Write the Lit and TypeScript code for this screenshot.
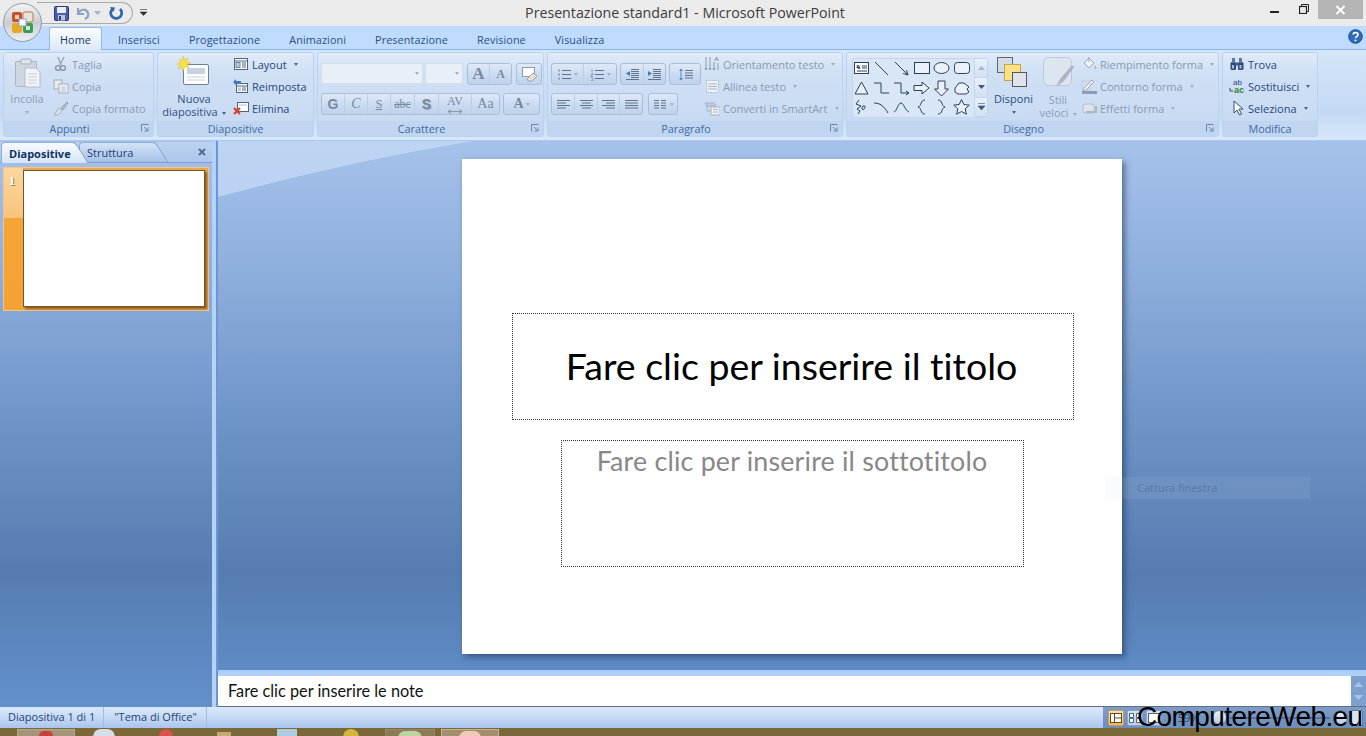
import { LitElement, css, html, svg } from 'lit';
import { customElement } from 'lit/decorators.js';

const icon = (w: number, h: number, body: unknown) =>
  html`<svg class="ico" width=${w} height=${h} viewBox="0 0 ${w} ${h}">${body}</svg>`;

const caret = html`<span class="caret"></span>`;

// small ribbon icons, 16x16
const ICONS: Record<string, unknown> = {
  cut: svg`<path d="M5 1l3 8M11 1L7 9" stroke="#9aa6b6" stroke-width="1.4" fill="none"/><circle cx="5" cy="12" r="2.4" fill="none" stroke="#8a96a8" stroke-width="1.4"/><circle cx="10" cy="12" r="2.4" fill="none" stroke="#8a96a8" stroke-width="1.4"/>`,
  copy: svg`<rect x="1" y="2" width="8" height="9" fill="#e6ebf2" stroke="#a6aebb"/><rect x="6" y="6" width="9" height="9" fill="#f0f3f7" stroke="#a6aebb"/><path d="M8 9h5M8 11h5M8 13h5" stroke="#b8c0cc"/>`,
  brush: svg`<path d="M1 15l5-7 3 3-4 4z" fill="#dfe3e8" stroke="#a9b0ba"/><path d="M8 8l6-6 1 1-5 7z" fill="#b7bdc6" stroke="#98a0ac"/>`,
  layout: svg`<rect x="1.500" y="2.500" width="13" height="11" fill="#fff" stroke="#4f6480"/><path d="M1.500 5h13" stroke="#4f6480"/><rect x="3" y="6.500" width="4" height="5" fill="#b9cbe2" stroke="#6d86a6"/><path d="M9 7h4M9 9h4M9 11h4" stroke="#4f6480"/>`,
  reset: svg`<rect x="3.500" y="5.500" width="11" height="9" fill="#fff" stroke="#4f6480"/><path d="M3.500 8h11" stroke="#4f6480"/><path d="M9 10h4M9 12h4" stroke="#4f6480"/><rect x="5" y="9.500" width="3" height="3.500" fill="#b9cbe2"/><path d="M0 4l3-3v2h5v3H3v1z" fill="#3f7ac2"/>`,
  del: svg`<rect x="4.500" y="2.500" width="11" height="9" fill="#fff" stroke="#4f6480"/><path d="M6 5h8" stroke="#aebfd5"/><path d="M1 8l6 6M7 8l-6 6" stroke="#d8402c" stroke-width="2.200"/>`,
  orient: svg`<path d="M2 1v13M6 1v13M10 6v8" stroke="#8b9bb0" fill="none"/><path d="M1 12l1 2 1-2M5 12l1 2 1-2M9 12l1 2 1-2" stroke="#8b9bb0" fill="none"/><path d="M10.500 5l2-4 2 4M11.500 3.500h2" stroke="#8b9bb0" fill="none"/><path d="M14 7v7" stroke="#8b9bb0"/>`,
  align: svg`<rect x="2.500" y="2.500" width="12" height="12" fill="#eef2f7" stroke="#b4bdc9" stroke-dasharray="2 1"/><path d="M4 6h9M4 8.500h9M4 11h9" stroke="#aab5c4"/>`,
  smart: svg`<path d="M1 3h9l2 3H3z" fill="#c4ccd7" stroke="#a6b0bd"/><rect x="7" y="7" width="9" height="8" fill="#eef2f7" stroke="#aab4c1"/><path d="M9 9.500h5M9 12h5" stroke="#aab4c1"/><path d="M3 6v5h4" fill="none" stroke="#a6b0bd"/>`,
  fill: svg`<path d="M3 7l5-5 5 5-5 5z" fill="#eef2f7" stroke="#9ba6b5"/><path d="M8 1v5" stroke="#9ba6b5"/><path d="M14 9c1 2 2 3 1 4s-2-1-1-4z" fill="#aab3bf"/>`,
  line: svg`<path d="M3 10l8-8 2 2-8 8-3 1z" fill="#f1f3f6" stroke="#9ba6b5"/><rect x="1" y="13" width="15" height="3" fill="#8c9cb3"/><rect x="1" y="3" width="8" height="9" fill="none" stroke="#c3cad4"/>`,
  fx: svg`<rect x="2" y="4" width="11" height="9" rx="2" fill="#dfe4ea" stroke="#b4bcc7"/><path d="M5 12h10V6" stroke="#aeb6c1" stroke-width="2" fill="none"/>`,
  find: svg`<rect x="1.500" y="6" width="5.500" height="8" rx="1.500" fill="#2d4d78"/><rect x="9" y="6" width="5.500" height="8" rx="1.500" fill="#2d4d78"/><rect x="3" y="2" width="3" height="5" fill="#5a7aa6"/><rect x="10" y="2" width="3" height="5" fill="#5a7aa6"/><rect x="6" y="6.500" width="4" height="3" fill="#3b5b88"/><rect x="3" y="9" width="2" height="3.500" fill="#a9c0dd"/><rect x="10.500" y="9" width="2" height="3.500" fill="#a9c0dd"/>`,
  select: svg`<path d="M5 1v12l3-3 2.500 5 2-1-2.500-5h4z" fill="#fff" stroke="#35506f"/>`,
};

const SHAPES = [
  svg`<rect x="2.500" y="3.500" width="14" height="11" fill="#fff" stroke="#2b3f5c"/><path d="M5 6l1.500 4M6.500 6l1.500 4M4.500 8.500h3M10 7h5M10 9h5M5 12h10" stroke="#2b3f5c" fill="none"/>`,
  svg`<path d="M3 3l13 13" stroke="#2b3f5c" fill="none"/>`,
  svg`<path d="M3 3l13 13M16 16l-5-1.500M16 16l-1.500-5" stroke="#2b3f5c" fill="none"/>`,
  svg`<rect x="2.500" y="3.500" width="15" height="11" fill="#eaf1fa" stroke="#2b3f5c"/>`,
  svg`<ellipse cx="9.500" cy="9" rx="7.500" ry="5.500" fill="#eaf1fa" stroke="#2b3f5c"/>`,
  svg`<rect x="2.500" y="3.500" width="15" height="11" rx="3" fill="#eaf1fa" stroke="#2b3f5c"/>`,
  svg`<path d="M9.500 3L16 15H3z" fill="#eaf1fa" stroke="#2b3f5c"/>`,
  svg`<path d="M2 4h7v10h8" fill="none" stroke="#2b3f5c"/>`,
  svg`<path d="M2 4h7v10h8M17 14l-3-2M17 14l-3 2" fill="none" stroke="#2b3f5c"/>`,
  svg`<path d="M2 6.500h8V3l7 6-7 6v-3.500H2z" fill="#eaf1fa" stroke="#2b3f5c"/>`,
  svg`<path d="M6 2h7v8h3.500l-7 7-7-7H6z" fill="#eaf1fa" stroke="#2b3f5c"/>`,
  svg`<path d="M3 13V9l4-5h5l5 4-2 2 2 3-3 2H6z" fill="#eaf1fa" stroke="#2b3f5c"/>`,
  svg`<path d="M7 2L4 6l5 2-4 3 3 2-2 3M11 8c2-1 3 1 1 3s-3-1-1-3" fill="none" stroke="#2b3f5c"/>`,
  svg`<path d="M2 5c6 0 10 3 14 10" fill="none" stroke="#2b3f5c"/>`,
  svg`<path d="M2 14c3-1 4-9 7-9s4 8 8 9" fill="none" stroke="#2b3f5c"/>`,
  svg`<path d="M13 2c-5 0-3 6-7 7 4 1 2 7 7 7" fill="none" stroke="#2b3f5c"/>`,
  svg`<path d="M6 2c5 0 3 6 7 7-4 1-2 7-7 7" fill="none" stroke="#2b3f5c"/>`,
  svg`<path d="M9.500 1.500l2.300 5 5.400.6-4 3.700 1.100 5.400-4.800-2.700-4.800 2.700 1.100-5.400-4-3.700 5.400-.6z" fill="#eaf1fa" stroke="#2b3f5c"/>`,
];

const TABS = ['Home', 'Inserisci', 'Progettazione', 'Animazioni', 'Presentazione', 'Revisione', 'Visualizza'];

const INK = '#60728c';

// paragraph toolbar glyphs
const para = (d: string) => icon(15, 13, svg`<path d=${d} stroke=${INK} fill="none"/>`);
const BULLETS = icon(15, 13, svg`<path d="M5 2.500h9M5 6.500h9M5 10.500h9" stroke=${INK}/><rect x="1" y="1.500" width="2" height="2" fill="#8aa2c2"/><rect x="1" y="5.500" width="2" height="2" fill="#8aa2c2"/><rect x="1" y="9.500" width="2" height="2" fill="#8aa2c2"/>`);
const NUMBERS = icon(15, 13, svg`<path d="M5 2.500h9M5 6.500h9M5 10.500h9" stroke=${INK}/><path d="M2 1v3M1 5.500h2v1.500H1v1.500h2M1 10h2v2.500H1" stroke="#8aa2c2" fill="none"/>`);
const INDENT_L = icon(15, 13, svg`<path d="M6 1.500h8M6 3.500h8M6 5.500h8M6 7.500h8M6 9.500h8M1 11.500h13" stroke=${INK}/><path d="M5 3v5L1 5.500z" fill="#4a78b0"/>`);
const INDENT_R = icon(15, 13, svg`<path d="M6 1.500h8M6 3.500h8M6 5.500h8M6 7.500h8M6 9.500h8M1 11.500h13" stroke=${INK}/><path d="M1 3v5l4-2.500z" fill="#4a78b0"/>`);
const SPACING = icon(15, 13, svg`<path d="M7 2.500h8M7 5h8M7 7.500h8M7 10h8" stroke=${INK}/><path d="M3 1v11" stroke="#5b8ac0"/><path d="M1 3l2-2.500L5 3zM1 10l2 2.500L5 10z" fill="#5b8ac0"/>`);

const small = (name: string, label: string, opts: { off?: boolean; more?: boolean } = {}) => html`
  <div class="small ${opts.off ? 'off' : ''}">
    ${icon(16, 16, ICONS[name])}<span>${label}</span>${opts.more ? caret : ''}
  </div>
`;

const group = (cls: string, label: string, launcher: boolean, body: unknown) => html`
  <section class="group ${cls}">
    <div class="gbody">${body}</div>
    <div class="glabel ${launcher ? 'has-launcher' : ''}">
      <span>${label}</span>
      ${launcher
        ? html`<i class="launcher">${icon(8, 8, svg`<path d="M.5 7.500v-7h7M3 3l3.500 3.500M7 3.500V7H3.500" fill="none" stroke="#6a86ad"/>`)}</i>`
        : ''}
    </div>
  </section>
`;

@customElement('app-root')
export class AppRoot extends LitElement {
  static styles = css`
    :host {
      display: block;
      position: relative;
      width: 1366px;
      height: 736px;
      overflow: hidden;
      font: 11px 'Open Sans', 'Noto Sans', sans-serif;
      color: #15428b;
    }
    .ico { display: block; flex: none; }

    .title {
      height: 26px;
      background: #ebebeb;
      display: flex;
      align-items: flex-start;
      position: relative;
    }
    .orb { position: absolute; left: 0; top: 0; z-index: 3; }
    .qat {
      margin-left: 37px;
      width: 96px;
      height: 22px;
      margin-top: 2px;
      border: 1px solid #a9a9a9;
      border-left: 0;
      border-radius: 0 12px 12px 0;
      display: flex;
      align-items: center;
      padding-left: 17px;
      box-sizing: border-box;
    }
    .qat .gap1 { margin-left: 7px; }
    .qat .gap2 { margin-left: 4px; }
    .qat .gap3 { margin-left: 7px; }
    .qat-more { margin: 9px 0 0 7px; }
    .doc-title {
      position: absolute;
      left: 0;
      right: 0;
      top: 4px;
      text-align: center;
      font-size: 14.200px;
      line-height: 18px;
      color: #3c3c3c;
      padding-left: 4px;
    }
    .winbtns { margin-left: auto; display: flex; align-items: flex-start; padding-right: 3px; position: relative; }
    .winbtns .m { margin: 11px 0 0 0; width: 9px; height: 2px; background: #222; }
    .winbtns .r { margin: 4px 9px 0 20px; }
    .winbtns .x {
      width: 45px;
      height: 19px;
      background: #b4b4b4;
      display: flex;
      align-items: center;
      justify-content: center;
    }

    .tabs {
      height: 24px;
      background: #bfdbff;
      display: flex;
      align-items: flex-end;
      padding-left: 49px;
      box-sizing: border-box;
      border-bottom: 1px solid #8db2e3;
      position: relative;
    }
    .tab {
      height: 22px;
      line-height: 25px;
      padding: 0 14.500px;
      color: #2b4f80;
      font-size: 10.800px;
      letter-spacing: 0.1px;
      white-space: nowrap;
    }
    .tab.on {
      width: 53px;
      box-sizing: border-box;
      padding: 0;
      text-align: center;
      height: 23px;
      line-height: 24px;
      margin: 0 1.500px -1px 0;
      background: linear-gradient(#fbfdff, #dce9f9);
      border: 1px solid #9ab8df;
      border-bottom: 0;
      border-radius: 3px 3px 0 0;
      color: #15385f;
    }
    .help { position: absolute; right: 3px; top: 3px; }

    .ribbon {
      height: 91px;
      box-sizing: border-box;
      display: flex;
      gap: 3px;
      padding: 2px 3px 0;
      background: linear-gradient(#d6e6fa, #c3d9f4 70%, #d8e8fb);
      border-bottom: 1px solid #a9c7ee;
    }
    .group {
      height: 85px;
      box-sizing: border-box;
      border: 1px solid #bcd1ec;
      border-radius: 3px;
      overflow: hidden;
      display: flex;
      flex-direction: column;
      background: linear-gradient(#e0ebf9, #d0e0f5 22%, #c6d9f2);
    }
    .gbody { height: 69px; display: flex; position: relative; box-sizing: border-box; }
    .glabel {
      flex: 1;
      background: #bfd5f0;
      text-align: center;
      line-height: 15px;
      color: #3f6aa3;
      font-size: 10.800px;
      position: relative;
    }
    .glabel.has-launcher { padding-right: 18px; }
    .launcher { position: absolute; right: 4px; top: 3px; }
    .g-app { width: 151px; }
    .g-dia { width: 157px; }
    .g-car { width: 227px; }
    .g-par { width: 296px; }
    .g-dis { width: 373px; }
    .g-mod { width: 96px; }

    .big {
      display: flex;
      flex-direction: column;
      align-items: center;
      text-align: center;
      line-height: 13px;
      color: #2b4f80;
      box-sizing: border-box;
    }
    .big.off { color: #8f9eb2; }
    .big .txt { margin-top: 4px; }
    .big > .caret { margin: 6px 0 0 0; }
    .col { display: flex; flex-direction: column; }
    .small {
      height: 22px;
      display: flex;
      align-items: center;
      gap: 3px;
      color: #25487a;
      white-space: nowrap;
    }
    .small.off { color: #8a9ab0; }
    .caret {
      display: inline-block;
      width: 0;
      height: 0;
      margin-left: 4px;
      border: 2.500px solid transparent;
      border-top: 3px solid #4a6288;
      border-bottom: 0;
      vertical-align: middle;
    }
    .off .caret, .tb .caret, .combo .caret { border-top-color: #a3aebf; }

    .b-incolla { width: 46px; padding-top: 5px; }
    .c-app { margin: 0 0 0 3px; }
    .b-nuova { width: 72px; padding-top: 3px; }
    .b-nuova .txt { margin-top: 6px; }
    .c-dia { margin: 0 0 0 3px; }

    .stack { padding: 10px 0 0 3px; display: flex; flex-direction: column; gap: 8px; }
    .c-par { padding-left: 3px; }
    .row { display: flex; gap: 3px; height: 22px; }
    .combo {
      height: 21px;
      background: #e9eff7;
      border: 1px solid #d3dfee;
      box-sizing: border-box;
      display: flex;
      align-items: center;
      justify-content: flex-end;
      padding-right: 3px;
    }
    .combo.font { width: 102px; margin-right: -1px; }
    .combo.size { width: 38px; }
    .tb {
      height: 22px;
      box-sizing: border-box;
      display: flex;
      align-items: center;
      border: 1px solid #a9bed9;
      border-radius: 3px;
      background: linear-gradient(#dfe9f6, #cbdcf2 50%, #bed2ec);
      color: #7b8ca6;
    }
    .tb > * {
      height: 100%;
      display: flex;
      align-items: center;
      justify-content: center;
      box-sizing: border-box;
      border-right: 1px solid #bccde4;
    }
    .tb > *:last-child { border-right: 0; }
    .tb .caret { margin-left: 2px; }
    .glyph { font: bold 12px 'Liberation Serif', serif; color: #77889f; white-space: nowrap; }
    .glyph.sans { font-family: 'Liberation Sans', sans-serif; }
    .glyph.thin { font-weight: 400; }
    .glyph.lg { font-size: 17px; }
    .glyph.md { font-size: 14px; }
    .glyph.ital { font-style: italic; }
    .glyph.under { text-decoration: underline; }
    .glyph.strike { text-decoration: line-through; }
    .glyph.shadow { text-shadow: 1px 1px 1px #9aa9bd; }
    .stretch { display: flex; flex-direction: column; align-items: center; line-height: 9px; }
    .w21 { width: 21px; } .w22 { width: 22px; }
    .w23 { width: 23px; } .w24 { width: 24px; } .w27 { width: 27px; } .w28 { width: 28px; }
    .w30 { width: 30px; } .w32 { width: 32px; } .w33 { width: 33px; } .w35 { width: 35px; }
    .ml1 { margin-left: 1px; }
    .ml2 { margin-left: 2px; }
    .gallery {
      width: 136px;
      height: 60px;
      margin: 5px 0 0 5px;
      display: flex;
      border: 1px solid #c4d5ec;
      border-radius: 2px;
      box-sizing: border-box;
      background: #d9e6f6;
    }
    .shapes {
      width: 121px;
      display: grid;
      grid-template-columns: repeat(6, 20px);
      grid-auto-rows: 19.500px;
    }
    .shapes .ico { margin-left: -1px; }
    .scroll { flex: 1; display: flex; flex-direction: column; }
    .scroll div {
      flex: 1;
      border-left: 1px solid #c4d5ec;
      border-bottom: 1px solid #c4d5ec;
      background: linear-gradient(#e9f0f9, #d2e0f3);
      display: flex;
      align-items: center;
      justify-content: center;
    }
    .b-disponi { width: 45px; margin-left: 3px; padding-top: 3px; }
    .b-disponi .ico { margin-left: -3px; }
    .b-disponi .txt { margin-top: 4px; }
    .b-stili { width: 44px; padding-top: 3px; }
    .b-stili .txt { margin-top: 5px; }
    .c-dis { margin: 0 0 0 1px; }
    .c-mod { margin: 0 0 0 6px; }
    .spacer { flex: 1; }

    .main { height: 566px; display: flex; background: #5d88c0; }
    .pane {
      width: 212px;
      background: linear-gradient(#a5c2ea 0, #8eaedd 23%, #7096c8 48%, #6287bb 63%, #557db1 76%, #5f8ac5 94%, #6290ca 100%);
      flex: none;
      box-sizing: border-box;
      padding-top: 1px;
    }
    .panetabs {
      height: 20px;
      display: flex;
      align-items: flex-end;
      border-bottom: 1px solid #7ba0d2;
      position: relative;
      padding-left: 1px;
      background: linear-gradient(#bcd2f0, #adc6ea);
    }
    .ptab {
      height: 20px;
      display: flex;
      align-items: center;
      padding-left: 7px;
      box-sizing: border-box;
      border: 1px solid #8badd9;
      border-bottom: 0;
      border-right: 0;
      border-radius: 4px 0 0 0;
      position: relative;
    }
    .ptab::after {
      content: '';
      position: absolute;
      right: -7px;
      top: -1px;
      bottom: 0;
      width: 14px;
      border-top: 1px solid #8badd9;
      border-right: 1px solid #6f94c8;
      border-radius: 0 4px 0 0;
      transform: skewX(32deg);
    }
    .ptab.on {
      width: 74px;
      background: linear-gradient(#f8fbff, #d6e5f8);
      font-weight: 700;
      color: #12315f;
      margin-bottom: -1px;
      height: 21px;
      z-index: 1;
    }
    .ptab.on::after { background: linear-gradient(#f8fbff, #d6e5f8); }
    .ptab.off {
      width: 76px;
      margin-left: 4px;
      padding-left: 7px;
      background: linear-gradient(#d4e3f6, #a5c0e6);
      color: #1d3e70;
    }
    .ptab.off::after { background: linear-gradient(#d4e3f6, #a5c0e6); }
    .ptab span { position: relative; z-index: 1; }
    .pclose { position: absolute; right: 6px; top: 6px; }
    .thumb {
      margin: 4px 3px 0;
      height: 144px;
      display: flex;
      border: 1px solid #f2c78a;
      box-sizing: border-box;
      background: #eba750;
      position: relative;
    }
    .numcol {
      width: 19px;
      background: linear-gradient(#fbd79e, #f9c47a 35%, #f5a535 35%, #f4a233);
      font: bold 12px 'Liberation Serif', serif;
      color: #fff;
      text-shadow: 1px 1px 0 #94743a;
      padding: 6px 0 0 5px;
      box-sizing: border-box;
      flex: none;
    }
    .thumbpage {
      width: 182px;
      height: 137px;
      margin-top: 2px;
      background: #fff;
      border: 1px solid #6f5530;
      box-sizing: border-box;
      box-shadow: 2px 2px 2px rgba(110, 60, 10, 0.7);
    }
    .splitter { width: 6px; flex: none; background: linear-gradient(90deg, #b6d3f7 0, #b6d3f7 66%, #6b96d6 66%, #6b96d6 100%); }
    .work { flex: 1; display: flex; flex-direction: column; min-width: 0; }
    .canvas {
      height: 529px;
      flex: none;
      box-sizing: border-box;
      padding-top: 2px;
      position: relative;
      overflow: hidden;
      display: flex;
      align-items: center;
      justify-content: center;
      background: linear-gradient(#a5c2ea 0, #8eaedd 25%, #7096c8 51%, #6287bb 68%, #557db1 82%, #5f8ac5 100%);
    }
    .swoosh { position: absolute; left: 0; top: 0; }
    .slide {
      position: relative;
      width: 660px;
      height: 495px;
      background: #fff;
      box-shadow: 3px 3px 6px rgba(25, 45, 80, 0.55);
      display: flex;
      flex-direction: column;
      align-items: center;
      box-sizing: border-box;
      padding-top: 154px;
      gap: 20px;
      font-family: Lato, 'Open Sans', sans-serif;
      font-variant-ligatures: none;
    }
    .ph-title {
      width: 562px;
      height: 107px;
      margin-left: 2px;
      padding: 0 3px 2px 0;
      border: 1px dotted #333;
      box-sizing: border-box;
      display: flex;
      align-items: center;
      justify-content: center;
      font-size: 37.500px;
      color: #000;
      white-space: nowrap;
    }
    .ph-sub {
      width: 463px;
      height: 127px;
      border: 1px dotted #333;
      box-sizing: border-box;
      text-align: center;
      font-size: 26.800px;
      line-height: 40px;
      letter-spacing: 0.2px;
      color: #888;
      white-space: nowrap;
    }
    .ghost {
      position: absolute;
      left: 887px;
      top: 336px;
      width: 205px;
      height: 22px;
      background: rgba(200, 215, 240, 0.1);
      color: rgba(50, 85, 140, 0.45);
      line-height: 22px;
      padding-left: 32px;
      box-sizing: border-box;
    }
    .notesrow {
      flex: 1;
      padding-top: 6px;
      display: flex;
      background: linear-gradient(#a6cdf5, #bcd6f7 30%, #c7dcf8);
    }
    .notes {
      flex: 1;
      background: #fff;
      color: #111;
      font: 16.300px/29px Lato, 'Open Sans', sans-serif;
      font-variant-ligatures: none;
      padding-left: 10px;
      white-space: nowrap;
      border-bottom: 1px solid #5d6f88;
    }
    .vscroll {
      width: 15px;
      flex: none;
      background: #7d9fcf;
      display: flex;
      flex-direction: column;
      justify-content: space-between;
      align-items: center;
      padding: 6px 0;
      box-sizing: border-box;
      border-bottom: 1px solid #5d6f88;
    }

    .status {
      height: 21px;
      display: flex;
      background: linear-gradient(#dbe8fb, #c5d9f4 50%, #a9c5ec);
      color: #1f4577;
      line-height: 20px;
    }
    .status .sec { padding: 0 8px; border-right: 1px solid #a3bcdc; white-space: nowrap; }
    .status .sec + .sec { padding: 0 9px 0 10px; }
    .zoombar {
      margin-left: auto;
      width: 263px;
      background: linear-gradient(#7f9cc6, #6f8dba);
      display: flex;
      align-items: center;
      box-sizing: border-box;
      padding-left: 5px;
      gap: 3px;
      color: #274873;
    }
    .view {
      width: 22px;
      height: 16px;
      display: flex;
      align-items: center;
      justify-content: center;
      border: 1px solid #8aa6cd;
      border-radius: 2px;
      box-sizing: border-box;
      background: linear-gradient(#d8e5f6, #b7cdea);
    }
    .view.on { background: linear-gradient(#fbe3a8, #f4b654); border-color: #c9a15e; }
    .pct { margin-left: 13px; }
    .slider { margin-left: 10px; display: flex; align-items: center; }
    .rnd {
      width: 15px;
      height: 15px;
      border-radius: 50%;
      border: 1px solid #5f7ba6;
      box-sizing: border-box;
      background: linear-gradient(#e9f0fa, #b5cae6);
    }
    .track { width: 100px; height: 2px; background: #56729e; margin: 0 3px; }
    .fit { margin-left: auto; margin-right: 3px; width: 16px; height: 16px; background: #d6e2f3; border: 1px solid #5f7ba6; box-sizing: border-box; }

    .taskbar {
      height: 8px;
      background: #7b6839;
      display: flex;
      overflow: hidden;
    }
    .tk { height: 9px; flex: none; }
    .btn { margin-top: 1px; background: #a4957a; border: 1px solid #b5a78f; box-sizing: border-box; display: flex; justify-content: center; }
    .dot { width: 14px; height: 5px; margin-top: 1px; border-radius: 7px 7px 0 0; }
    .t1 { margin-left: 17px; width: 58px; }
    .t1 .dot { background: #c8423a; }
    .t2 { margin: 1px 0 0 18px; width: 22px; background: #d7dce6; border-radius: 8px 8px 0 0; }
    .t3 { margin: 1px 0 0 44px; width: 14px; background: #d8534c; border-radius: 7px 7px 0 0; }
    .t4 { margin: 4px 0 0 44px; width: 14px; background: #c8a873; }
    .t5 { margin: 1px 0 0 46px; width: 20px; background: #aecbe0; }
    .t6 { margin: 1px 0 0 46px; width: 16px; background: #d2b53a; border-radius: 8px 8px 0 0; }
    .t7 { margin-left: 26px; width: 50px; background: #8a7a55; border-color: #96876a; }
    .t7 .dot { width: 24px; height: 8px; background: #bcd3a3; }
    .t8 { margin-left: 6px; width: 58px; background: #a58e6e; border-color: #c5b298; }
    .t8 .dot { width: 22px; height: 8px; background: #eec9b8; }

    .watermark {
      position: absolute;
      left: 1137px;
      top: 699px;
      font: 28px/36px 'Liberation Sans', Arial, sans-serif;
      color: #000;
      white-space: nowrap;
      letter-spacing: -0.6px;
    }
  `;

  render() {
    return html`
      ${this.renderTitle()}
      ${this.renderTabs()}
      ${this.renderRibbon()}
      <div class="main">
        <aside class="pane">
          <div class="panetabs">
            <div class="ptab on"><span>Diapositive</span></div>
            <div class="ptab off"><span>Struttura</span></div>
            <span class="pclose">${icon(8, 8, svg`<path d="M1 1l6 6M7 1L1 7" stroke="#4e6a92" stroke-width="1.800"/>`)}</span>
          </div>
          <div class="thumb">
            <div class="numcol">1</div>
            <div class="thumbpage"></div>
          </div>
        </aside>
        <div class="splitter"></div>
        <div class="work">
          <div class="canvas">
            <svg class="swoosh" width="320" height="60" viewBox="0 0 320 60">
              <path d="M0 0H255C170 14 80 34 0 56z" fill="#c6daf5" opacity=".75"/>
            </svg>
            <div class="slide">
              <div class="ph-title">Fare clic per inserire il titolo</div>
              <div class="ph-sub">Fare clic per inserire il sottotitolo</div>
            </div>
            <div class="ghost">Cattura finestra</div>
          </div>
          <div class="notesrow">
            <div class="notes">Fare clic per inserire le note</div>
            <div class="vscroll">
              ${icon(9, 5, svg`<path d="M4.500 0l4.500 5H0z" fill="#adc3e2"/>`)}
              ${icon(9, 5, svg`<path d="M4.500 5L9 0H0z" fill="#adc3e2"/>`)}
            </div>
          </div>
        </div>
      </div>
      <footer class="status">
        <div class="sec">Diapositiva 1 di 1</div>
        <div class="sec">"Tema di Office"</div>
        <div class="zoombar">
          <div class="view on">${icon(12, 10, svg`<rect x=".5" y=".5" width="11" height="9" fill="#fff" stroke="#5a4a2a"/><path d="M4.500 1v8M5 5h6" stroke="#5a4a2a"/>`)}</div>
          <div class="view">${icon(12, 10, svg`<path d="M.5.500h4v4h-4zM7.500.500h4v4h-4zM.5 5.500h4v4h-4zM7.500 5.500h4v4h-4z" fill="#fff" stroke="#4f6480"/>`)}</div>
          <div class="view">${icon(12, 10, svg`<rect x=".5" y=".5" width="11" height="9" fill="#fff" stroke="#4f6480"/>`)}</div>
          <span class="pct">59%</span>
          <div class="slider"><div class="rnd"></div><div class="track"></div><div class="rnd"></div></div>
          <div class="fit"></div>
        </div>
      </footer>
      <div class="taskbar">
        <div class="tk btn t1"><span class="dot"></span></div>
        <div class="tk t2"></div>
        <div class="tk t3"></div>
        <div class="tk t4"></div>
        <div class="tk t5"></div>
        <div class="tk t6"></div>
        <div class="tk btn t7"><span class="dot"></span></div>
        <div class="tk btn t8"><span class="dot"></span></div>
      </div>
      <div class="watermark">ComputereWeb.eu</div>
    `;
  }

  private renderTitle() {
    return html`
      <header class="title">
        <svg class="orb" width="46" height="46" viewBox="0 0 46 46">
          <defs>
            <linearGradient id="orbg" x1="0" y1="0" x2="0" y2="1">
              <stop offset="0" stop-color="#f3f5f7"/><stop offset=".5" stop-color="#c9ced4"/><stop offset="1" stop-color="#eef0f2"/>
            </linearGradient>
          </defs>
          <circle cx="22.500" cy="22.500" r="19" fill="url(#orbg)" stroke="#8f9aa6"/>
          <rect x="12" y="12" width="10" height="10" rx="2" fill="#c9502c"/>
          <rect x="23" y="12" width="10" height="10" rx="2" fill="#e8e4d8" stroke="#b57a4a"/>
          <rect x="12" y="23" width="10" height="10" rx="2" fill="#e9a823"/>
          <rect x="23" y="23" width="10" height="10" rx="2" fill="#3f9c56"/>
          <rect x="19" y="19" width="7" height="7" fill="#fff" stroke="#7ea6d6"/>
          <rect x="15" y="15" width="4" height="4" fill="#f0d2b8"/>
          <rect x="26" y="26" width="4" height="4" fill="#cfe8cf"/>
        </svg>
        <div class="qat">
          ${icon(15, 15, svg`<rect x=".5" y=".5" width="14" height="14" rx="1" fill="#4a5fa8" stroke="#2c3a78"/><rect x="3" y="1" width="9" height="6" fill="#e8edf6"/><rect x="4" y="9" width="7" height="5.500" fill="#b9c5de"/><rect x="5" y="10" width="2" height="4" fill="#2c3a78"/>`)}
          <span class="gap1">${icon(14, 14, svg`<path d="M2 2v6h6M2 8c2-5 8-6 10-1 1 3-1 5-3 6" fill="none" stroke="#8fa3c4" stroke-width="2.200"/>`)}</span>
          <span class="gap2">${icon(7, 4, svg`<path d="M0 0h7L3.500 4z" fill="#a5b3c8"/>`)}</span>
          <span class="gap3">${icon(15, 15, svg`<path d="M12 3a5.500 5.500 0 1 1-7-.5" fill="none" stroke="#2f68b0" stroke-width="2.800"/><path d="M2 1l5 .5L5.500 6z" fill="#2f68b0"/>`)}</span>
        </div>
        <span class="qat-more">${icon(7, 7, svg`<path d="M0 .5h7M0 3h7L3.500 6.500z" fill="#333" stroke="#333" stroke-width=".6"/>`)}</span>
        <div class="doc-title">Presentazione standard1 - Microsoft PowerPoint</div>
        <div class="winbtns">
          <div class="m"></div>
          <div class="r">${icon(10, 10, svg`<rect x=".5" y="2.500" width="7" height="7" fill="none" stroke="#222" stroke-width="1.200"/><path d="M2.500 2.500V.5h7v7H7.500" fill="none" stroke="#222"/>`)}</div>
          <div class="x">${icon(11, 10, svg`<path d="M1.500 1l8 8M9.500 1l-8 8" stroke="#fff" stroke-width="1.800"/>`)}</div>
        </div>
      </header>
    `;
  }

  private renderTabs() {
    return html`
      <nav class="tabs">
        ${TABS.map((t, i) => html`<div class="tab ${i === 0 ? 'on' : ''}">${t}</div>`)}
        <span class="help">
          ${icon(15, 15, svg`<circle cx="7.500" cy="7.500" r="6.800" fill="#2f6cc0" stroke="#1d4c94"/><path d="M5 5.500c.5-2.500 5-2.500 5 .3 0 1.700-2.500 1.700-2.500 3.500" fill="none" stroke="#fff" stroke-width="1.600"/><circle cx="7.500" cy="11.500" r="1" fill="#fff"/>`)}
        </span>
      </nav>
    `;
  }

  private renderRibbon() {
    return html`
      <div class="ribbon">
        ${group('g-app', 'Appunti', true, html`
          <div class="big off b-incolla">
            ${icon(28, 30, svg`<rect x="2.500" y="3.500" width="21" height="25" rx="1" fill="#cfd6df" stroke="#aab4c1"/><rect x="8" y="1" width="10" height="5" rx="1" fill="#dfe4ea" stroke="#a6b0bd"/><path d="M12 10h11l4 4v15H12z" fill="#f1f4f8" stroke="#b1bac6"/><path d="M15 16h9M15 19h9M15 22h9M15 25h9" stroke="#c8d0db"/>`)}
            <span class="txt">Incolla</span>${caret}
          </div>
          <div class="col c-app">
            ${small('cut', 'Taglia', { off: true })}
            ${small('copy', 'Copia', { off: true })}
            ${small('brush', 'Copia formato', { off: true })}
          </div>
        `)}
        ${group('g-dia', 'Diapositive', false, html`
          <div class="big b-nuova">
            ${icon(34, 30, svg`<rect x="6.500" y="8.500" width="25" height="20" rx="1.500" fill="#fff" stroke="#6d7f99"/><rect x="10" y="12" width="18" height="6" fill="#c7d2e0"/><path d="M10 21h18M10 24h18" stroke="#c7d2e0"/><path d="M6 0l1.500 4L11 2 9.500 6 14 7l-4 1.500L12 12 8 10.500 6 15l-1.500-4L1 13l2-4-3-1 4-1.500L2 3l3 1.500z" fill="#f8e04a" stroke="#e8b92a" stroke-width=".5"/>`)}
            <span class="txt">Nuova<br />diapositiva${caret}</span>
          </div>
          <div class="col c-dia">
            ${small('layout', 'Layout', { more: true })}
            ${small('reset', 'Reimposta')}
            ${small('del', 'Elimina')}
          </div>
        `)}
        ${group('g-car', 'Carattere', true, html`
          <div class="stack">
            <div class="row">
              <div class="combo font">${caret}</div>
              <div class="combo size">${caret}</div>
              <div class="tb ml1">
                <div class="w22"><span class="glyph lg">A</span></div>
                <div class="w21"><span class="glyph">A</span></div>
              </div>
              <div class="tb ml1">
                <div class="w24">${icon(18, 16, svg`<rect x="2.500" y="1.500" width="12" height="9" fill="#fff" stroke="#8c9cb3"/><path d="M7 13l6-6 4 3-5 5H8z" fill="#f2d9cf" stroke="#9ba6b5"/>`)}</div>
              </div>
            </div>
            <div class="row">
              <div class="tb">
                <div class="w23"><span class="glyph sans md">G</span></div>
                <div class="w23"><span class="glyph thin ital md">C</span></div>
                <div class="w23"><span class="glyph thin under">S</span></div>
                <div class="w24"><span class="glyph thin strike">abc</span></div>
                <div class="w24"><span class="glyph sans shadow md">S</span></div>
                <div class="w33"><span class="stretch"><span class="glyph thin">AV</span>${icon(16, 5, svg`<path d="M1 2.500h14M1 2.500l3-2M1 2.500l3 2M15 2.500l-3-2M15 2.500l-3 2" stroke="#8a9ab0" fill="none"/>`)}</span></div>
                <div class="w27"><span class="glyph thin md">Aa</span></div>
              </div>
              <div class="tb">
                <div class="w35"><span class="glyph md">A</span>${caret}</div>
              </div>
            </div>
          </div>
        `)}
        ${group('g-par', 'Paragrafo', true, html`
          <div class="stack">
            <div class="row">
              <div class="tb">
                <div class="w32">${BULLETS}${caret}</div>
                <div class="w32">${NUMBERS}${caret}</div>
              </div>
              <div class="tb">
                <div class="w23">${INDENT_L}</div>
                <div class="w21">${INDENT_R}</div>
              </div>
              <div class="tb"><div class="w30">${SPACING}</div></div>
            </div>
            <div class="row">
              <div class="tb">
                <div class="w23">${para('M1 2.500h13M1 5h9M1 7.500h13M1 10h9')}</div>
                <div class="w23">${para('M1 2.500h13M3 5h9M1 7.500h13M3 10h9')}</div>
                <div class="w22">${para('M1 2.500h13M5 5h9M1 7.500h13M5 10h9')}</div>
                <div class="w22">${para('M1 2.500h13M1 5h13M1 7.500h13M1 10h13')}</div>
              </div>
              <div class="tb ml2"><div class="w28">${para('M1 2.500h5M8 2.500h5M1 5h5M8 5h5M1 7.500h5M8 7.500h5M1 10h5M8 10h5')}${caret}</div></div>
            </div>
          </div>
          <div class="col c-par">
            ${small('orient', 'Orientamento testo', { off: true, more: true })}
            ${small('align', 'Allinea testo', { off: true, more: true })}
            ${small('smart', 'Converti in SmartArt', { off: true, more: true })}
          </div>
        `)}
        ${group('g-dis', 'Disegno', true, html`
          <div class="gallery">
            <div class="shapes">${SHAPES.map((s) => icon(19, 18, s))}</div>
            <div class="scroll">
              <div>${icon(7, 4, svg`<path d="M3.500 0L7 4H0z" fill="#a9b6c8"/>`)}</div>
              <div>${icon(7, 4, svg`<path d="M3.500 4L7 0H0z" fill="#3f5a80"/>`)}</div>
              <div>${icon(7, 7, svg`<path d="M0 .5h7M3.500 7L7 3H0z" fill="#3f5a80" stroke="#3f5a80" stroke-width=".6"/>`)}</div>
            </div>
          </div>
          <div class="big b-disponi">
            ${icon(32, 32, svg`<rect x="1.500" y="1.500" width="15" height="15" fill="#d5dbe4" stroke="#5b6675"/><rect x="8.500" y="8.500" width="16" height="16" fill="#f9e089" stroke="#c8a83e"/><rect x="16.500" y="16.500" width="14" height="14" fill="#e0e4ea" stroke="#4d5766"/>`)}
            <span class="txt">Disponi</span>${caret}
          </div>
          <div class="big off b-stili">
            ${icon(32, 32, svg`<rect x="1.500" y="1.500" width="28" height="28" rx="5" fill="#dde5ef" stroke="#bcc8d8"/><path d="M14 31l4-8 12-14 2 2-10 14z" fill="#aab5c4"/>`)}
            <span class="txt">Stili<br />veloci${caret}</span>
          </div>
          <div class="col c-dis">
            ${small('fill', 'Riempimento forma', { off: true, more: true })}
            ${small('line', 'Contorno forma', { off: true, more: true })}
            ${small('fx', 'Effetti forma', { off: true, more: true })}
          </div>
        `)}
        ${group('g-mod', 'Modifica', false, html`
          <div class="col c-mod">
            ${small('find', 'Trova')}
            <div class="small">
              ${icon(16, 16, svg`<text x="4" y="7" font-size="8" font-family="Liberation Sans" fill="#25487a">ab</text><text x="5" y="15" font-size="9" font-weight="bold" font-family="Liberation Sans" fill="#2a8a2a">ac</text><path d="M1 10v3h3" fill="none" stroke="#25487a"/>`)}
              <span>Sostituisci</span>${caret}
            </div>
            ${small('select', 'Seleziona', { more: true })}
          </div>
        `)}
        <div class="spacer"></div>
      </div>
    `;
  }
}
